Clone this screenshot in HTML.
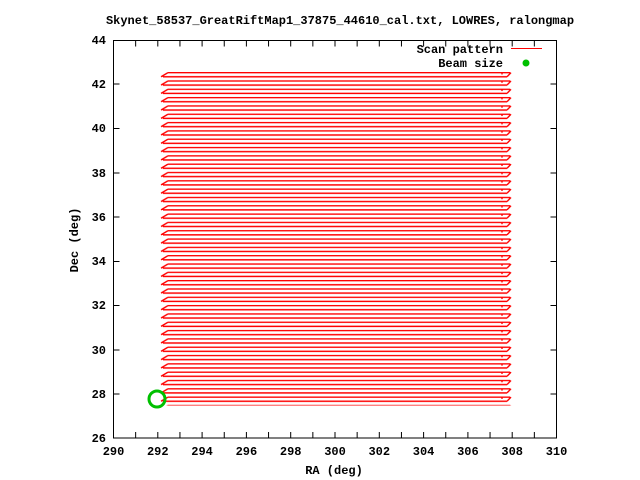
<!DOCTYPE html>
<html><head><meta charset="utf-8"><style>
html,body{margin:0;padding:0;background:#fff;}
svg{display:block;}
text{font-family:"Liberation Mono",monospace;font-weight:bold;font-size:12px;fill:#000;}
</style></head><body>
<svg width="640" height="480" viewBox="0 0 640 480" xmlns="http://www.w3.org/2000/svg">
<defs>
<pattern id="scan" patternUnits="userSpaceOnUse" x="0" y="72" width="640" height="8.32">
<path d="M168 0.6H510M163 4.76H507M168 0.6L161 4.76M507 4.76L511 0.6M502 0.6V2.5" stroke="#f00" stroke-width="1.4" fill="none"/>
</pattern>
</defs>
<rect x="155" y="71.5" width="360" height="334" fill="url(#scan)"/>
<rect x="113.5" y="40.5" width="443" height="397.5" fill="none" stroke="#000" stroke-width="1"/>
<g stroke="#000" stroke-width="1">
<path d="M135.65 438v-6M135.65 40.5v6M157.8 438v-6M157.8 40.5v6M179.95 438v-6M179.95 40.5v6M202.1 438v-6M202.1 40.5v6M224.25 438v-6M224.25 40.5v6M246.4 438v-6M246.4 40.5v6M268.55 438v-6M268.55 40.5v6M290.7 438v-6M290.7 40.5v6M312.85 438v-6M312.85 40.5v6M335 438v-6M335 40.5v6M357.15 438v-6M357.15 40.5v6M379.3 438v-6M379.3 40.5v6M401.45 438v-6M401.45 40.5v6M423.6 438v-6M423.6 40.5v6M445.75 438v-6M445.75 40.5v6M467.9 438v-6M467.9 40.5v6M490.05 438v-6M490.05 40.5v6M512.2 438v-6M512.2 40.5v6M534.35 438v-6M534.35 40.5v6"/>
<path d="M113.5 394h6M556.5 394h-6M113.5 350h6M556.5 350h-6M113.5 305.5h6M556.5 305.5h-6M113.5 261.5h6M556.5 261.5h-6M113.5 217h6M556.5 217h-6M113.5 173h6M556.5 173h-6M113.5 128.5h6M556.5 128.5h-6M113.5 84h6M556.5 84h-6"/>
</g>
<text x="340" y="24" text-anchor="middle">Skynet_58537_GreatRiftMap1_37875_44610_cal.txt, LOWRES, ralongmap</text>
<g text-anchor="end">
<text x="106" y="442">26</text><text x="106" y="398">28</text><text x="106" y="354">30</text>
<text x="106" y="309">32</text><text x="106" y="265">34</text><text x="106" y="221">36</text>
<text x="106" y="177">38</text><text x="106" y="132">40</text><text x="106" y="88">42</text>
<text x="106" y="44">44</text>
</g>
<g text-anchor="middle">
<text x="113.5" y="455">290</text><text x="157.8" y="455">292</text><text x="202.1" y="455">294</text>
<text x="246.4" y="455">296</text><text x="290.7" y="455">298</text><text x="335" y="455">300</text>
<text x="379.3" y="455">302</text><text x="423.6" y="455">304</text><text x="467.9" y="455">306</text>
<text x="512.2" y="455">308</text><text x="556.5" y="455">310</text>
</g>
<text x="334" y="474" text-anchor="middle">RA (deg)</text>
<text transform="translate(78,240) rotate(-90)" text-anchor="middle">Dec (deg)</text>
<text x="503" y="53" text-anchor="end">Scan pattern</text>
<path d="M511 48.5H542" stroke="#f00" stroke-width="1"/>
<text x="503" y="67" text-anchor="end">Beam size</text>
<circle cx="526" cy="63" r="2.5" fill="#00c000" stroke="#00c000" stroke-width="2"/>
<circle cx="157" cy="399" r="8" fill="none" stroke="#00c000" stroke-width="3"/>
</svg>
</body></html>
